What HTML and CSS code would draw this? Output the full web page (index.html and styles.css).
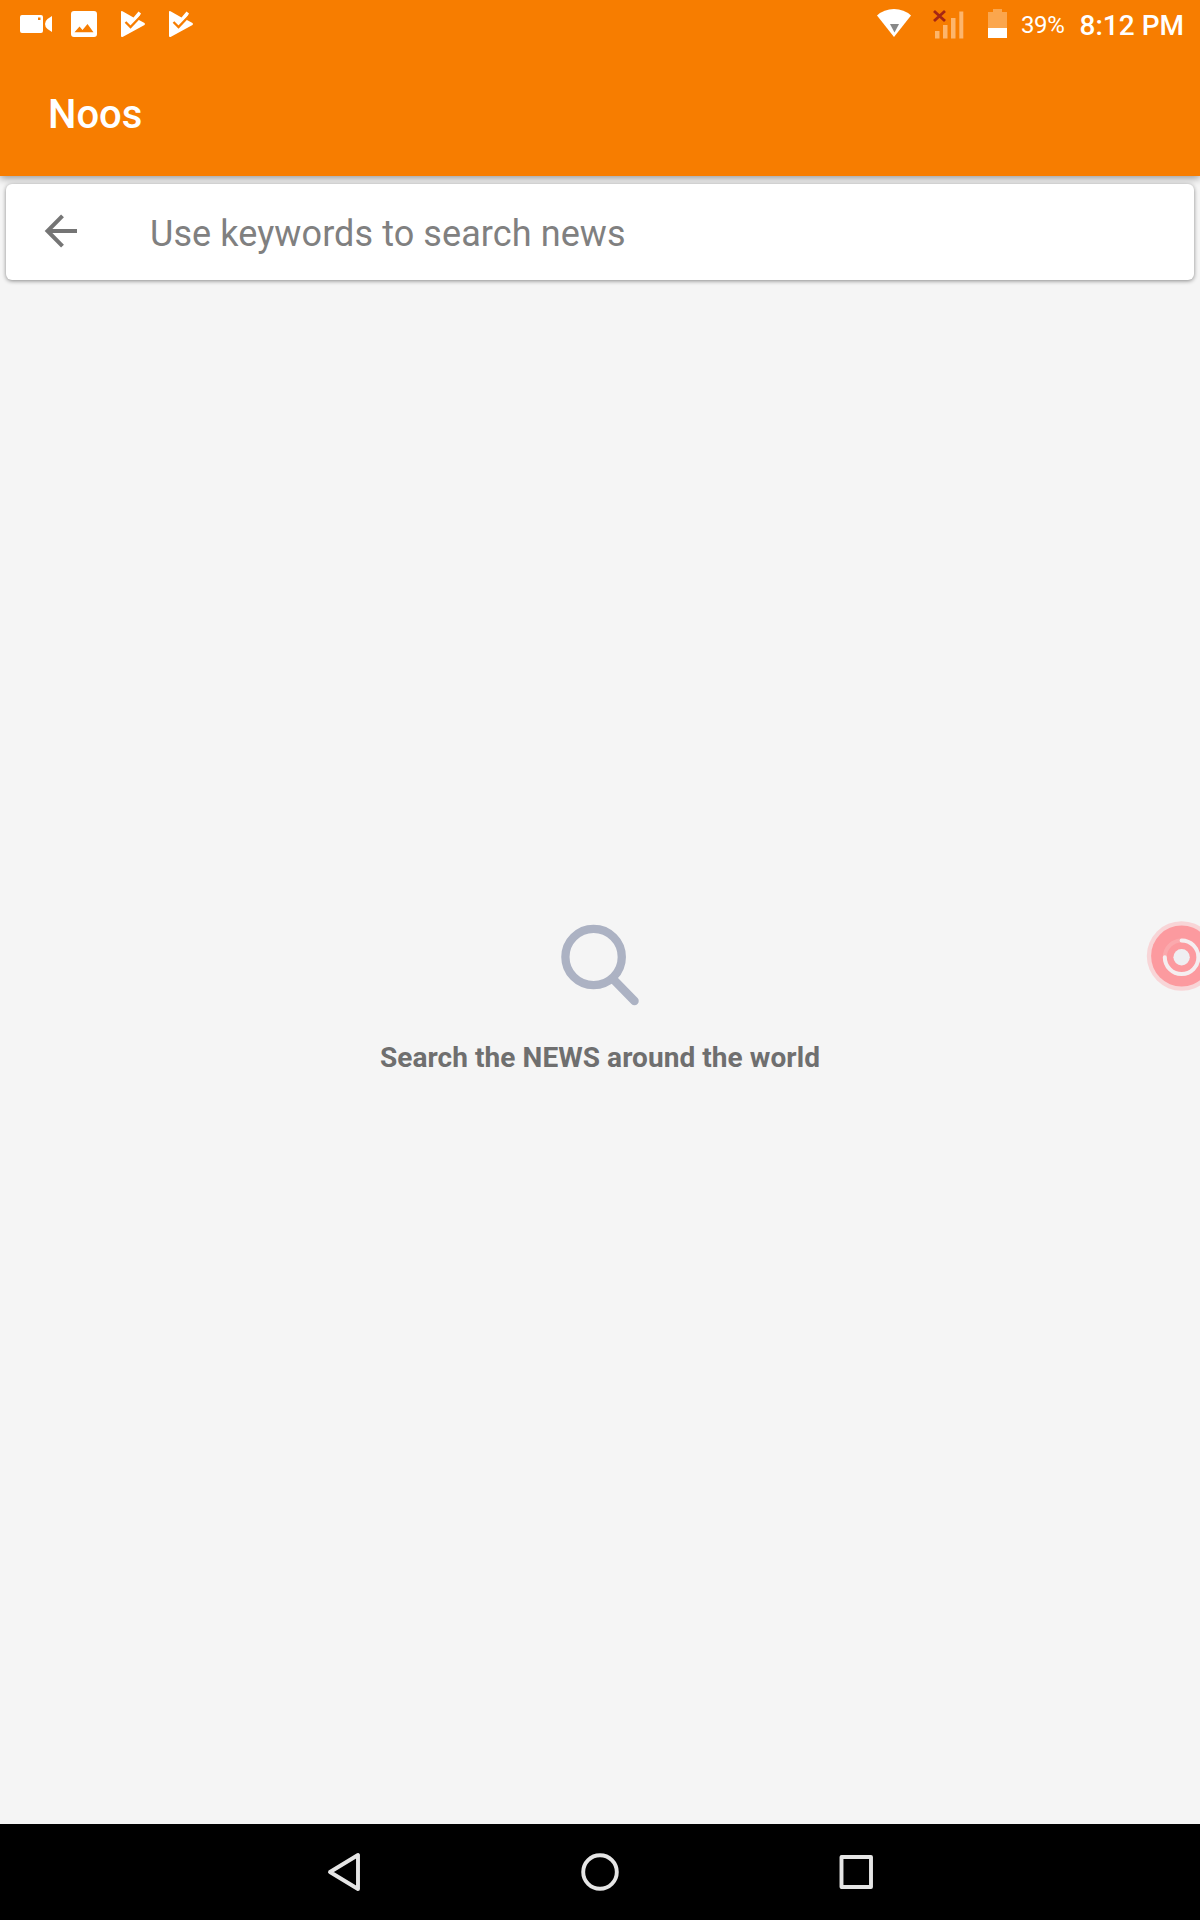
FILE: index.html
```html
<!DOCTYPE html>
<html lang="en">
<head>
<meta charset="utf-8">
<title>Noos</title>
<link rel="stylesheet" href="styles.css">
</head>
<body>
<div class="screen">
  <header class="header">
    <div class="status">
      <svg class="status-left" width="210" height="48" viewBox="0 0 210 48" fill="#fff">
        <path fill-rule="evenodd" d="M22 15H41a2 2 0 0 1 2 2V31a2 2 0 0 1-2 2H22a2 2 0 0 1-2-2V17a2 2 0 0 1 2-2ZM38 17.500V20H40.500V17.500Z"/>
        <path d="M52 16V32L47.500 29Q45 27 45 24T47.500 19Z"/>
        <path fill-rule="evenodd" d="M74 11H94a3 3 0 0 1 3 3V34a3 3 0 0 1-3 3H74a3 3 0 0 1-3-3V14a3 3 0 0 1 3-3ZM74.500 32.300H93.500L87.500 24L82.500 30L79.500 26.500Z"/>
        <g id="play"><path d="M121 12Q121 10.500 122.500 11.200L133.500 17.500L138.500 11.500L141 13.500L138 19.600L144.500 23Q145.500 24 144.500 25L123 36.800Q121 37.500 121 36Z"/><path d="M125.500 22L130.500 27L142 15" fill="none" stroke="#f77d00" stroke-width="2.300"/></g>
        <use href="#play" x="48"/>
      </svg>
      <div class="status-right">
        <svg width="140" height="48" viewBox="872 0 140 48">
          <path d="M894 37L877 15.500Q884 9 894 9T911 15.500Z" fill="#fff"/>
          <path d="M890 24H899L894.500 32.500Z" fill="#888"/>
          <path d="M935 31h4.500v7.500h-4.500ZM943 25h4.500v13.500h-4.500ZM951 18h4.500v20.500h-4.500ZM959.300 11.500h4v27h-4Z" fill="#fdb56b"/>
          <path d="M934 11L945 21M945 11L934 21" stroke="#a52714" stroke-width="2.800"/>
          <path d="M993 9h9v3h5v16h-19V12h5Z" fill="#fba64d"/>
          <path d="M988 28h19v10h-19Z" fill="#fff"/>
        </svg>
        <span class="battery">39%</span>
        <span class="clock">8:12 PM</span>
      </div>
    </div>
    <h1 class="title">Noos</h1>
  </header>
  <main class="content">
    <div class="search">
      <svg width="34" height="34" viewBox="0 0 34 34" fill="none" stroke="#757575" stroke-width="4"><path d="M18.500 1.800L3.500 17L18.500 32.200M3 17H33"/></svg>
      <span class="placeholder">Use keywords to search news</span>
    </div>
    <div class="empty">
      <svg width="80" height="82" viewBox="560 924 80 82" fill="none" stroke="#acb2c3"><circle cx="593.600" cy="957" r="28.200" stroke-width="8.300"/><path d="M614 980L634.500 1001" stroke-width="8.500" stroke-linecap="round"/></svg>
      <p class="message">Search the NEWS around the world</p>
    </div>
  </main>
  <nav class="nav">
    <svg width="1200" height="96" viewBox="0 1824 1200 96" fill="none" stroke="#e6e6e6" stroke-width="3.900" stroke-linejoin="round"><path d="M330 1872L358 1855V1889Z"/><circle cx="600" cy="1872" r="16.800"/><rect x="841.500" y="1857" width="29.500" height="30"/></svg>
  </nav>
  <svg class="bubble" width="54" height="72" viewBox="1146 920 54 72">
    <circle cx="1181.600" cy="956" r="34.800" fill="#f8d5d7"/>
    <circle cx="1181.600" cy="956" r="30.500" fill="#fc9a9f"/>
    <g fill="none" stroke-width="4" stroke-linecap="round"><circle cx="1181.600" cy="957.300" r="16.800" stroke="#fba9ad"/><path d="M1181.600 940.500A16.800 16.800 0 1 1 1164.800 957.300" stroke="#f5eef0"/></g>
    <circle cx="1181.600" cy="957.300" r="8.200" fill="#efeff2"/>
  </svg>
</div>
</body>
</html>
```
FILE: styles.css
```css
* { box-sizing: border-box; }
body { margin: 0; font-family: Roboto, sans-serif; }
svg { display: block; flex: none; }
.screen { position: relative; display: flex; flex-direction: column; width: 1200px; height: 1920px; overflow: hidden; background: #f5f5f5; }
.header { position: relative; flex: none; height: 176px; background: #f77d00; color: #fff; box-shadow: 0 2px 8px rgba(0, 0, 0, .4); }
.status { display: flex; justify-content: space-between; height: 48px; }
.status-right { display: flex; align-items: center; padding-right: 16px; }
.battery { margin-left: 9px; padding-top: 2px; font-size: 24px; line-height: 28px; letter-spacing: -.3px; }
.clock { margin-left: 15px; padding-top: 3px; font-size: 28px; line-height: 32px; font-weight: 500; }
.title { margin: 0; padding: 5px 0 0 48px; font-size: 40px; line-height: 123px; font-weight: 500; }
.content { display: flex; flex: 1; flex-direction: column; padding: 8px 6px 0; }
.search { z-index: 1; display: flex; flex: none; align-items: center; gap: 72px; height: 96px; padding-left: 38px; padding-bottom: 2px; border-radius: 6px; background: #fff; box-shadow: 0 1px 4px rgba(0, 0, 0, .45); }
.placeholder { padding-top: 6px; color: #808080; font-size: 36px; line-height: 44px; letter-spacing: .09px; }
.empty { display: flex; flex: 1; flex-direction: column; align-items: center; padding-top: 644px; }
.message { margin: 35px 0 0; color: #6f6f6f; font-size: 28px; line-height: 34px; font-weight: 700; letter-spacing: .07px; }
.nav { flex: none; height: 96px; background: #000; }
.bubble { position: absolute; right: 0; top: 920px; }
```
